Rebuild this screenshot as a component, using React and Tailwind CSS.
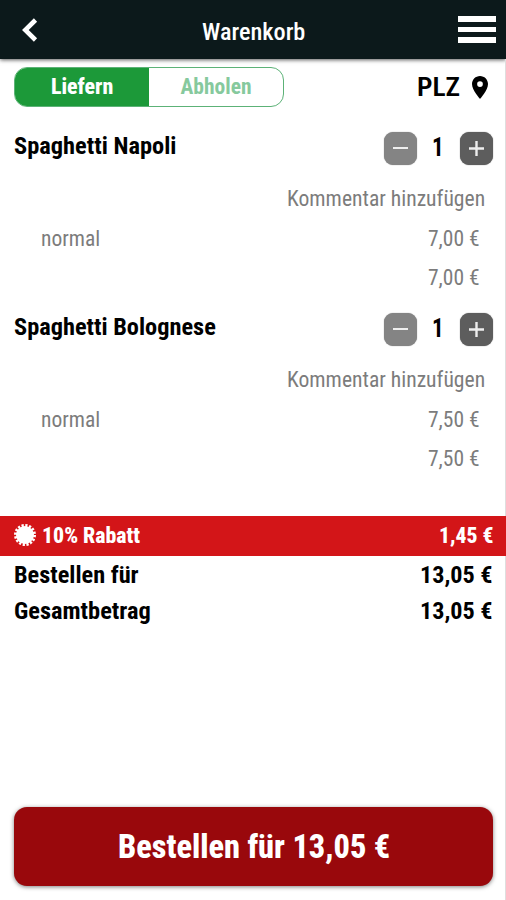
import { useLayoutEffect, useRef, useState } from "react";

// Condensed label: its glyphs are squeezed to fill the width of the box.
function Label({ className = "", children }) {
  const box = useRef(null);
  const text = useRef(null);
  const [scale, setScale] = useState(1);
  useLayoutEffect(() => {
    setScale(box.current.clientWidth / text.current.offsetWidth);
  }, []);
  return (
    <span ref={box} className={`block shrink-0 whitespace-nowrap ${className}`}>
      <span ref={text} className="inline-block origin-left" style={{ transform: `scaleX(${scale})` }}>
        {children}
      </span>
    </span>
  );
}

function Item({ name, nameWidth, price }) {
  return (
    <section className="h-[181px] pt-[11px]">
      <div className="flex h-[36px] items-center justify-between pr-[12px] pl-[14px]">
        <Label className={`-mt-[5px] text-[23.5px] leading-[28px] font-bold ${nameWidth}`}>{name}</Label>
        <div className="flex items-center">
          <button className="flex size-[33px] items-center justify-center rounded-[9px] bg-[#848484] shadow-[0_0_1px_#777]">
            <span className="h-[2.5px] w-[15px] bg-[#eee]" />
          </button>
          <Label className="ml-[15px] w-[12px] text-[25px] leading-[28px] font-bold">1</Label>
          <button className="ml-[16px] flex size-[33px] items-center justify-center rounded-[9px] bg-[#5d5d5d] shadow-[0_0_1px_#555]">
            <svg className="size-[15px]" viewBox="0 0 15 15" stroke="#eee" strokeWidth="2.4">
              <path d="M0 7.5H15M7.5 0V15" />
            </svg>
          </button>
        </div>
      </div>
      <div className="mt-[13px] flex h-[40px] items-center justify-end pr-[20px] text-[21.5px] leading-[28px] text-[#7c7c7c]">
        <Label className="w-[198px]">Kommentar hinzufügen</Label>
      </div>
      <div className="flex h-[40px] items-center justify-between pr-[25px] pl-[41px] text-[21.5px] leading-[28px] text-[#7c7c7c]">
        <Label className="w-[59px]">normal</Label>
        <Label className="w-[52px]">{price}</Label>
      </div>
      <div className="flex h-[38px] items-center justify-end pr-[25px] text-[21.5px] leading-[28px] text-[#7c7c7c]">
        <Label className="w-[52px]">{price}</Label>
      </div>
    </section>
  );
}

export default function App() {
  return (
    <main className="flex h-[900px] w-[506px] flex-col overflow-hidden bg-white font-['Roboto_Condensed',Roboto,sans-serif] text-black [font-stretch:75%]">
      <header className="flex h-[59px] shrink-0 items-center justify-between bg-[#0c191b] pr-[10px] pl-[21px] text-white shadow-[0_1px_4px_rgba(0,0,0,0.65)]">
        <svg className="h-[26px] w-[18px]" viewBox="0 0 18 26" fill="none" stroke="white" strokeWidth="4.6">
          <path d="M14.5 3L4.3 13L14.5 23" />
        </svg>
        <Label className="mt-[4px] ml-[10px] w-[103px] text-[24px] leading-[28px] font-medium">Warenkorb</Label>
        <div className="flex w-[38px] flex-col gap-[5px]">
          <span className="h-[5.5px] bg-white" />
          <span className="h-[5.5px] bg-white" />
          <span className="h-[5.5px] bg-white" />
        </div>
      </header>

      <div className="flex-1 border-r border-[#dedede]">
        <div className="flex h-[60px] justify-between pt-[8px]">
          <div className="ml-[14px] flex h-[40px] w-[270px] overflow-hidden rounded-[13px] border border-[#5cb277] text-[21.5px] leading-[28px] font-bold">
            <div className="flex w-[134px] items-center justify-center bg-[#1c9939] text-white">
              <Label className="w-[62px] font-extrabold">Liefern</Label>
            </div>
            <div className="flex flex-1 items-center justify-center text-[#86c99d]">
              <Label className="w-[71px]">Abholen</Label>
            </div>
          </div>
          <div className="mr-[17px] flex h-[40px] items-center">
            <Label className="w-[43px] text-[25.5px] leading-[28px] font-semibold">PLZ</Label>
            <svg className="ml-[12px] h-[23px] w-[16px]" viewBox="5 2 14 20" preserveAspectRatio="none" fill="black">
              <path d="M12 2C8.13 2 5 5.13 5 9c0 5.25 7 13 7 13s7-7.75 7-13c0-3.87-3.13-7-7-7zm0 9.5a2.5 2.5 0 1 1 0-5 2.5 2.5 0 0 1 0 5z" />
            </svg>
          </div>
        </div>
        <Item name="Spaghetti Napoli" nameWidth="w-[162px]" price="7,00 €" />
        <Item name="Spaghetti Bolognese" nameWidth="w-[202px]" price="7,50 €" />
      </div>

      <div className="flex h-[40px] shrink-0 items-center justify-between bg-[#d31518] pr-[13px] pl-[14px] text-[22px] leading-[28px] font-extrabold text-white">
        <div className="flex items-center">
          <svg className="-mt-[2px] size-[22px]" viewBox="-11 -11 22 22" fill="white">
            <circle r="9" />
            <circle r="9.5" fill="none" stroke="white" strokeWidth="3" strokeDasharray="2.2 1.531" />
          </svg>
          <Label className="ml-[6px] w-[98px]">10% Rabatt</Label>
        </div>
        <Label className="w-[54px]">1,45 €</Label>
      </div>

      <div className="h-[251px] shrink-0 border-r border-[#dedede] text-[23.5px] leading-[28px] font-bold">
        <div className="flex h-[37px] items-center justify-between pr-[12px] pl-[14px]">
          <Label className="w-[125px]">Bestellen für</Label>
          <Label className="w-[73px]">13,05 €</Label>
        </div>
        <div className="flex h-[36px] items-center justify-between pr-[12px] pl-[14px]">
          <Label className="w-[137px]">Gesamtbetrag</Label>
          <Label className="w-[73px]">13,05 €</Label>
        </div>
      </div>

      <footer className="h-[93px] shrink-0 border-r border-[#dedede] pr-[12px] pl-[14px]">
        <button className="flex h-[79px] w-full items-center justify-center rounded-[13px] bg-[#99080c] text-[33px] leading-[40px] font-extrabold text-white shadow-[0_1px_4px_rgba(0,0,0,0.5)]">
          <Label className="w-[272px]">Bestellen für 13,05 €</Label>
        </button>
      </footer>
    </main>
  );
}
